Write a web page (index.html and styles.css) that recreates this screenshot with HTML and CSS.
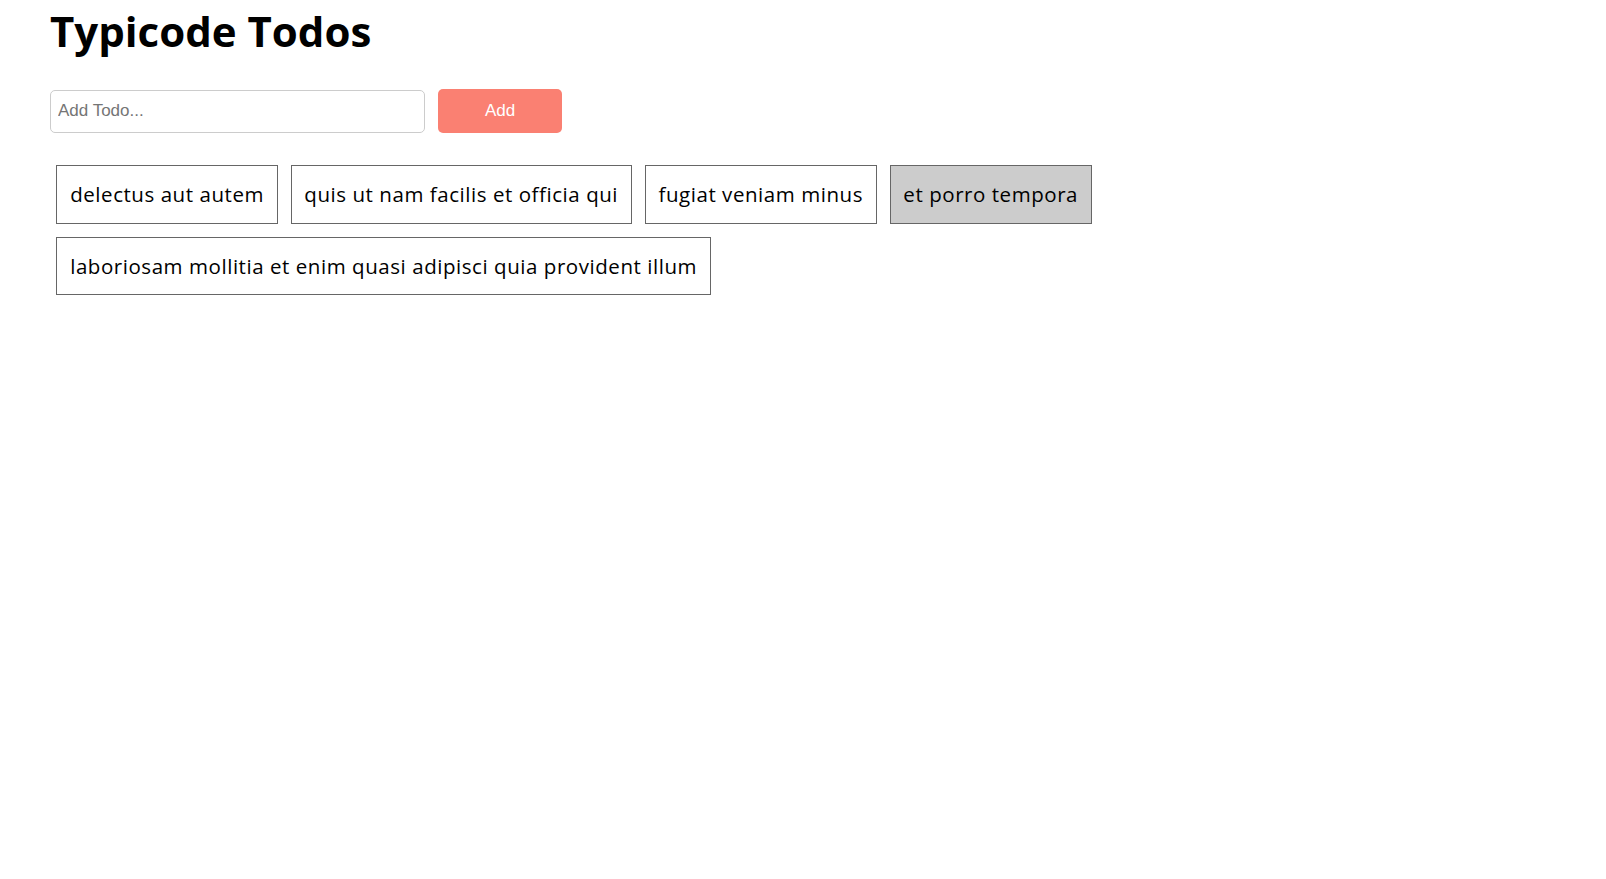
FILE: index.html
```html
<!DOCTYPE html>
<html lang="en">
<head>
<meta charset="utf-8">
<title>Typicode Todos</title>
<link rel="stylesheet" href="styles.css">
</head>
<body>
<div class="app">
  <h1 class="title">Typicode Todos</h1>
  <form class="add-form">
    <input class="add-input" type="text" placeholder="Add Todo...">
    <button class="add-btn" type="button">Add</button>
  </form>
  <div class="todos">
    <div class="todo">delectus aut autem</div>
    <div class="todo">quis ut nam facilis et officia qui</div>
    <div class="todo">fugiat veniam minus</div>
    <div class="todo done">et porro tempora</div>
    <div class="todo">laboriosam mollitia et enim quasi adipisci quia provident illum</div>
  </div>
</div>
</body>
</html>
```

FILE: styles.css
```css
* { box-sizing: border-box; }
html, body { margin: 0; padding: 0; background: #fff; }
body {
  font-family: "Open Sans", "DejaVu Sans", sans-serif;
  color: #000;
}
.app {
  padding: 0 50px;
}
.title {
  margin: 0;
  padding-top: 6px;
  font-size: 42px;
  font-weight: 700;
  line-height: 50px;
  letter-spacing: 0;
}
.add-form {
  display: flex;
  align-items: center;
  gap: 13px;
  margin-top: 33px;
}
.add-input {
  width: 375px;
  height: 43px;
  border: 1px solid #ccc;
  border-radius: 5px;
  padding: 0 7px;
  font-family: "Liberation Sans", Arial, sans-serif;
  font-size: 17px;
  color: #333;
  outline: none;
}
.add-input::placeholder { color: #757575; }
.add-btn {
  width: 124px;
  height: 44px;
  border: none;
  border-radius: 5px;
  background: #fa8072;
  color: #fff;
  font-family: "Liberation Sans", Arial, sans-serif;
  font-size: 17px;
  cursor: pointer;
}
.todos {
  display: flex;
  flex-wrap: wrap;
  margin-top: 26px;
}
.todo {
  margin: 6.4px;
  padding: 12.8px;
  border: 1px solid #666;
  font-size: 20.5px;
  line-height: 31px;
  letter-spacing: 0.55px;
  cursor: pointer;
}
.todo.done { background: #ccc; }
```
